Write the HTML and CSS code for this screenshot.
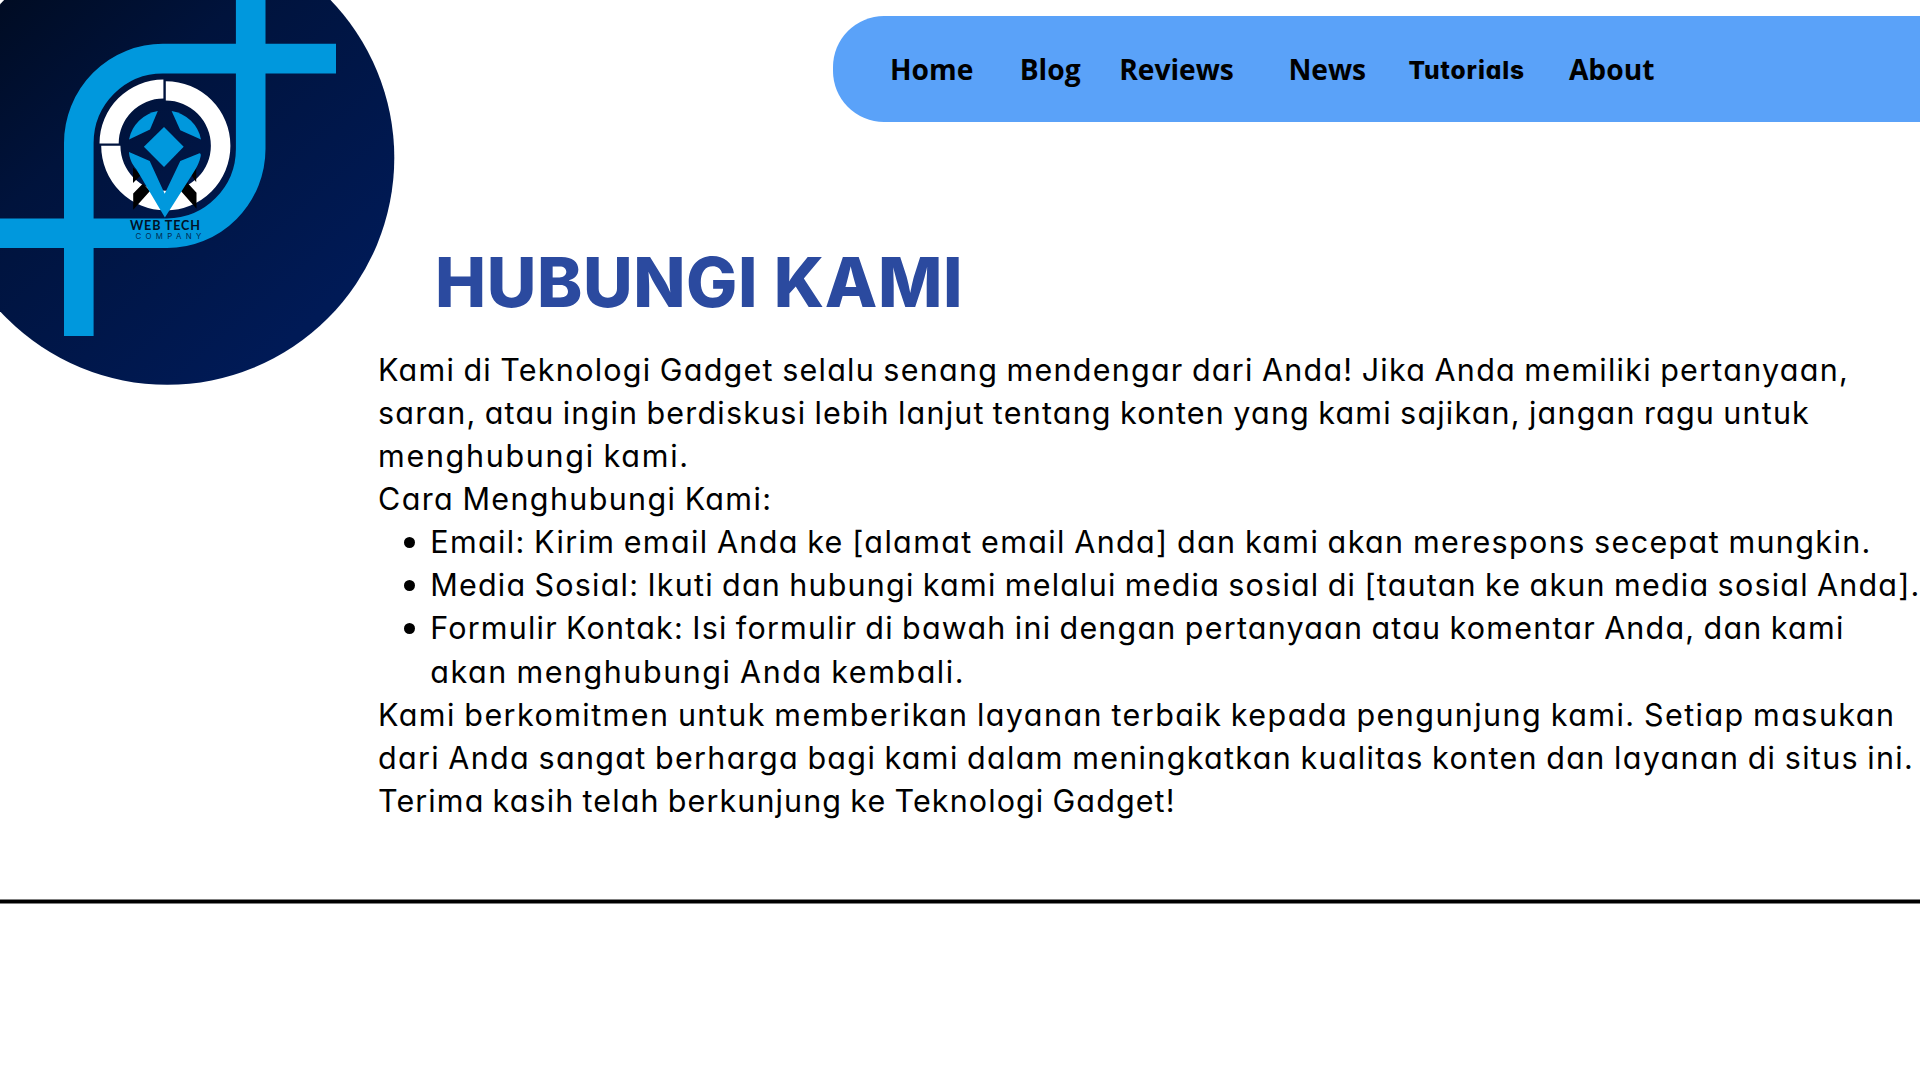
FILE: index.html
```
<!DOCTYPE html>
<html lang="id">
<head>
<meta charset="utf-8">
<title>Hubungi Kami - Teknologi Gadget</title>
<link rel="stylesheet" href="styles.css">
</head>
<body>
<div class="page">
  <aside class="brand">
    <svg class="logo" width="396" height="386" viewBox="0 0 396 386" role="img" aria-label="Web Tech Company">
      <defs>
        <linearGradient id="disc" gradientUnits="userSpaceOnUse" x1="10" y1="0" x2="300" y2="330">
          <stop offset="0" stop-color="#000c24"/>
          <stop offset=".35" stop-color="#00133c"/>
          <stop offset="1" stop-color="#001a56"/>
        </linearGradient>
      </defs>
      <circle cx="167.3" cy="157.8" r="227" fill="url(#disc)"/>
      <g fill="none" stroke="#0098dd" stroke-width="29.6">
        <path d="M78.8 336V143A84 84.5 0 0 1 163 58.6H336"/>
        <path d="M250.7 0V149A84 84.5 0 0 1 167 233.3H0"/>
      </g>
      <g fill="#fff">
        <path d="M163.4 79.6V98.6A44.8 44.8 0 0 0 118.7 143.4H99.5A63.9 63.9 0 0 1 163.4 79.6Z"/>
        <path d="M165.8 81.2A64.6 64.6 0 1 1 101.2 145.8H120.4C120.8 171 140 190.8 165.8 190.8A45 45 0 0 0 165.8 100.6Z"/>
      </g>
      <g fill="#000">
        <path d="M133 167.5V183L141 175ZM133.2 193.5L143 183.4L150 191L133.2 209.8Z"/>
        <path d="M196.2 167.5V182.3L190 173ZM180 190L187.2 182.5L196.5 192.7V208.8Z"/>
      </g>
      <g fill="#0098dd">
        <path d="M157.8 111L150 129.5L129 139.4A36 36 0 0 1 157.8 111Z"/>
        <path d="M171.6 111L180.3 130.3L201 139.4A36 36 0 0 0 171.6 111Z"/>
        <path d="M164 127L183.7 146.7L164 167L143.9 146.7Z"/>
        <path d="M129 152L149.7 161L164.7 193.7L180.3 161L199.5 153.2Q201.3 153.6 200.6 156.5C199.6 162 197 167 193.5 172.5L164.9 217.5L136.5 169.5C131.5 163.5 129.3 158 129 152Z"/>
      </g>
      <text class="logo-name" x="130" y="230.3" textLength="70">WEB TECH</text>
      <text class="logo-sub" x="135.4" y="238.8" textLength="66">COMPANY</text>
    </svg>
  </aside>

  <nav class="nav">
    <a class="nav-link">Home</a>
    <a class="nav-link nav-blog">Blog</a>
    <a class="nav-link nav-reviews">Reviews</a>
    <a class="nav-link nav-news">News</a>
    <a class="nav-link nav-tutorials">Tutorials</a>
    <a class="nav-link nav-about">About</a>
  </nav>

  <main class="content">
    <h1 class="title">HUBUNGI KAMI</h1>
    <p class="para"><span class="line l1">Kami di Teknologi Gadget selalu senang mendengar dari Anda! Jika Anda memiliki pertanyaan,</span>
      <span class="line l2">saran, atau ingin berdiskusi lebih lanjut tentang konten yang kami sajikan, jangan ragu untuk</span>
      <span class="line l3">menghubungi kami.</span></p>
    <p class="para"><span class="line l4">Cara Menghubungi Kami:</span></p>
    <ul class="list">
      <li class="item"><span class="line l5">Email: Kirim email Anda ke [alamat email Anda] dan kami akan merespons secepat mungkin.</span></li>
      <li class="item"><span class="line l6">Media Sosial: Ikuti dan hubungi kami melalui media sosial di [tautan ke akun media sosial Anda].</span></li>
      <li class="item"><div><span class="line l7">Formulir Kontak: Isi formulir di bawah ini dengan pertanyaan atau komentar Anda, dan kami</span>
        <span class="line l8">akan menghubungi Anda kembali.</span></div></li>
    </ul>
    <p class="para"><span class="line l9">Kami berkomitmen untuk memberikan layanan terbaik kepada pengunjung kami. Setiap masukan</span>
      <span class="line l10">dari Anda sangat berharga bagi kami dalam meningkatkan kualitas konten dan layanan di situs ini.</span>
      <span class="line l11">Terima kasih telah berkunjung ke Teknologi Gadget!</span></p>
  </main>
</div>
<hr class="rule">
</body>
</html>
```
FILE: styles.css
```
body {
  margin: 0;
  background: #fff;
  color: #000;
  overflow: hidden;
  font-family: Inter, "Open Sans", sans-serif;
  font-feature-settings: "cv11";
}

.page {
  display: grid;
  grid-template-columns: 378px 1542px;
  grid-template-rows: 242px auto;
  height: 899px;
}

.brand {
  grid-row: 1 / 3;
}

.logo {
  display: block;
  overflow: hidden;
}

.logo-name {
  font: 700 12.6px Lato, sans-serif;
  fill: #021126;
}

.logo-sub {
  font: 400 7.8px Inter, sans-serif;
  fill: #022a50;
}

.nav {
  display: flex;
  align-items: flex-start;
  box-sizing: border-box;
  height: 106.7px;
  margin: 15.7px 0 0 455px;
  padding: 34px 0 0 57px;
  border-radius: 51px 0 0 51px;
  background: #5aa2f9;
}

.nav-link {
  font: 700 28.2px "Open Sans", sans-serif;
  white-space: nowrap;
}

.nav-blog { margin-left: 46.3px; }
.nav-reviews { margin-left: 38.6px; }
.nav-news { margin-left: 54.5px; }

.nav-tutorials {
  width: 117px;
  margin-left: 42.3px;
  font: 800 24.5px/41px Inter, sans-serif;
  font-feature-settings: "cv11";
  letter-spacing: 0.9px;
}

.nav-about { margin-left: 43.5px; }

.title {
  margin: 0 0 25.9px 57px;
  font-size: 68.3px;
  line-height: 80px;
  font-weight: 800;
  letter-spacing: 0.6px;
  color: #2b4a9f;
}

.para,
.list {
  margin: 0;
  padding: 0;
  list-style: none;
  font-size: 30.5px;
  line-height: 43.1px;
  word-spacing: -1.5px;
}

.line {
  display: block;
  white-space: nowrap;
}

.item {
  display: flex;
  align-items: flex-start;
}

.item::before {
  content: "";
  flex: none;
  width: 11px;
  height: 11px;
  margin: 16.4px 15.2px 0 26px;
  border-radius: 50%;
  background: #000;
}

.l1 { letter-spacing: 1.25px; }
.l2 { letter-spacing: 1.19px; }
.l3 { letter-spacing: 1.7px; }
.l4 { letter-spacing: 1.35px; }
.l5 { letter-spacing: 1.36px; }
.l6 { letter-spacing: 1.2px; }
.l7 { letter-spacing: 1.2px; }
.l8 { letter-spacing: 1.54px; }
.l9 { letter-spacing: 1.43px; }
.l10 { letter-spacing: 1.32px; }
.l11 { letter-spacing: 1.1px; }

.rule {
  box-sizing: border-box;
  height: 5px;
  margin: 0;
  border: solid #808080;
  border-width: 1px 0;
  background: #000;
}
```
